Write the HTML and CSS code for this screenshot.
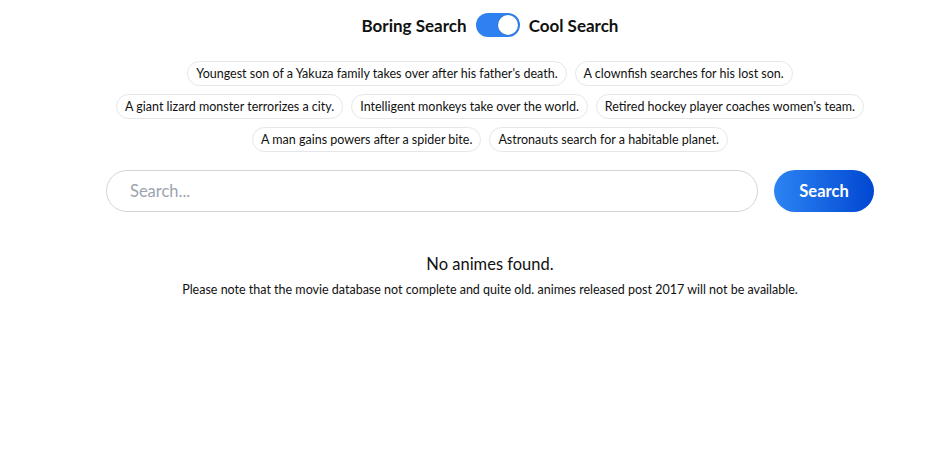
FILE: index.html
```html
<!DOCTYPE html>
<html lang="en">
<head>
<meta charset="utf-8">
<title>Anime Search</title>
<link rel="stylesheet" href="styles.css">
</head>
<body>
<div class="page">
  <div class="content">
    <div class="mode-row">
      <span class="mode-label">Boring Search</span>
      <span class="toggle"><span class="knob"></span></span>
      <span class="mode-label">Cool Search</span>
    </div>
    <div class="chips">
      <span class="chip">Youngest son of a Yakuza family takes over after his father's death.</span>
      <span class="chip">A clownfish searches for his lost son.</span>
      <span class="chip">A giant lizard monster terrorizes a city.</span>
      <span class="chip">Intelligent monkeys take over the world.</span>
      <span class="chip">Retired hockey player coaches women's team.</span>
      <span class="chip">A man gains powers after a spider bite.</span>
      <span class="chip">Astronauts search for a habitable planet.</span>
    </div>
    <div class="search-row">
      <input class="search-input" type="text" placeholder="Search...">
      <button class="search-btn">Search</button>
    </div>
    <div class="empty">
      <p class="empty-title">No animes found.</p>
      <p class="empty-note">Please note that the movie database not complete and quite old. animes released post 2017 will not be available.</p>
    </div>
  </div>
</div>
</body>
</html>
```

FILE: styles.css
```css
* { box-sizing: border-box; }
html, body { margin: 0; background: #fff; }
body { font-family: Lato, "Liberation Sans", sans-serif; color: #111; }
.page { padding-left: 38px; }
.content {
  width: 768px;
  margin: 0 auto;
  padding-top: 14px;
  display: flex;
  flex-direction: column;
  align-items: center;
}
.mode-row {
  display: flex;
  align-items: center;
  gap: 9px;
  height: 24px;
  margin-top: -1px;
}
.mode-label { font-weight: 700; font-size: 17px; }
.toggle {
  width: 44px; height: 24px; border-radius: 12px;
  background: #2f80f0;
  position: relative;
  display: inline-block;
}
.knob {
  position: absolute; right: 2px; top: 2px;
  width: 20px; height: 20px; border-radius: 50%;
  background: #fff;
  box-shadow: 0 0 0 0.5px rgba(0,0,0,0.15);
}
.chips {
  margin-top: 24px;
  display: flex; flex-wrap: wrap; justify-content: center;
  gap: 8px 8px;
  width: 768px;
}
.chip {
  font-size: 12.5px;
  height: 25px;
  line-height: 23px;
  padding: 0 8px;
  border: 1px solid #e5e7eb;
  border-radius: 13px;
}
.search-row {
  margin-top: 18px;
  width: 768px;
  display: flex; gap: 16px;
}
.search-input {
  flex: 1;
  height: 42px;
  border: 1px solid #d1d5db;
  border-radius: 21px;
  padding: 0 23px;
  font-family: inherit;
  font-size: 16.5px;
  outline: none;
}
.search-input::placeholder { color: #9ca3af; }
.search-btn {
  width: 100px; height: 42px;
  border: 0; border-radius: 21px;
  background: linear-gradient(90deg, #2d84f2, #0047d2);
  color: #fff; font-family: inherit; font-weight: 700; font-size: 16.5px;
}
.empty { margin-top: 40px; text-align: center; }
.empty-title { margin: 0; font-size: 16.5px; line-height: 24px; }
.empty-note { margin: 6px 0 0; font-size: 12.5px; line-height: 16px; }
```
